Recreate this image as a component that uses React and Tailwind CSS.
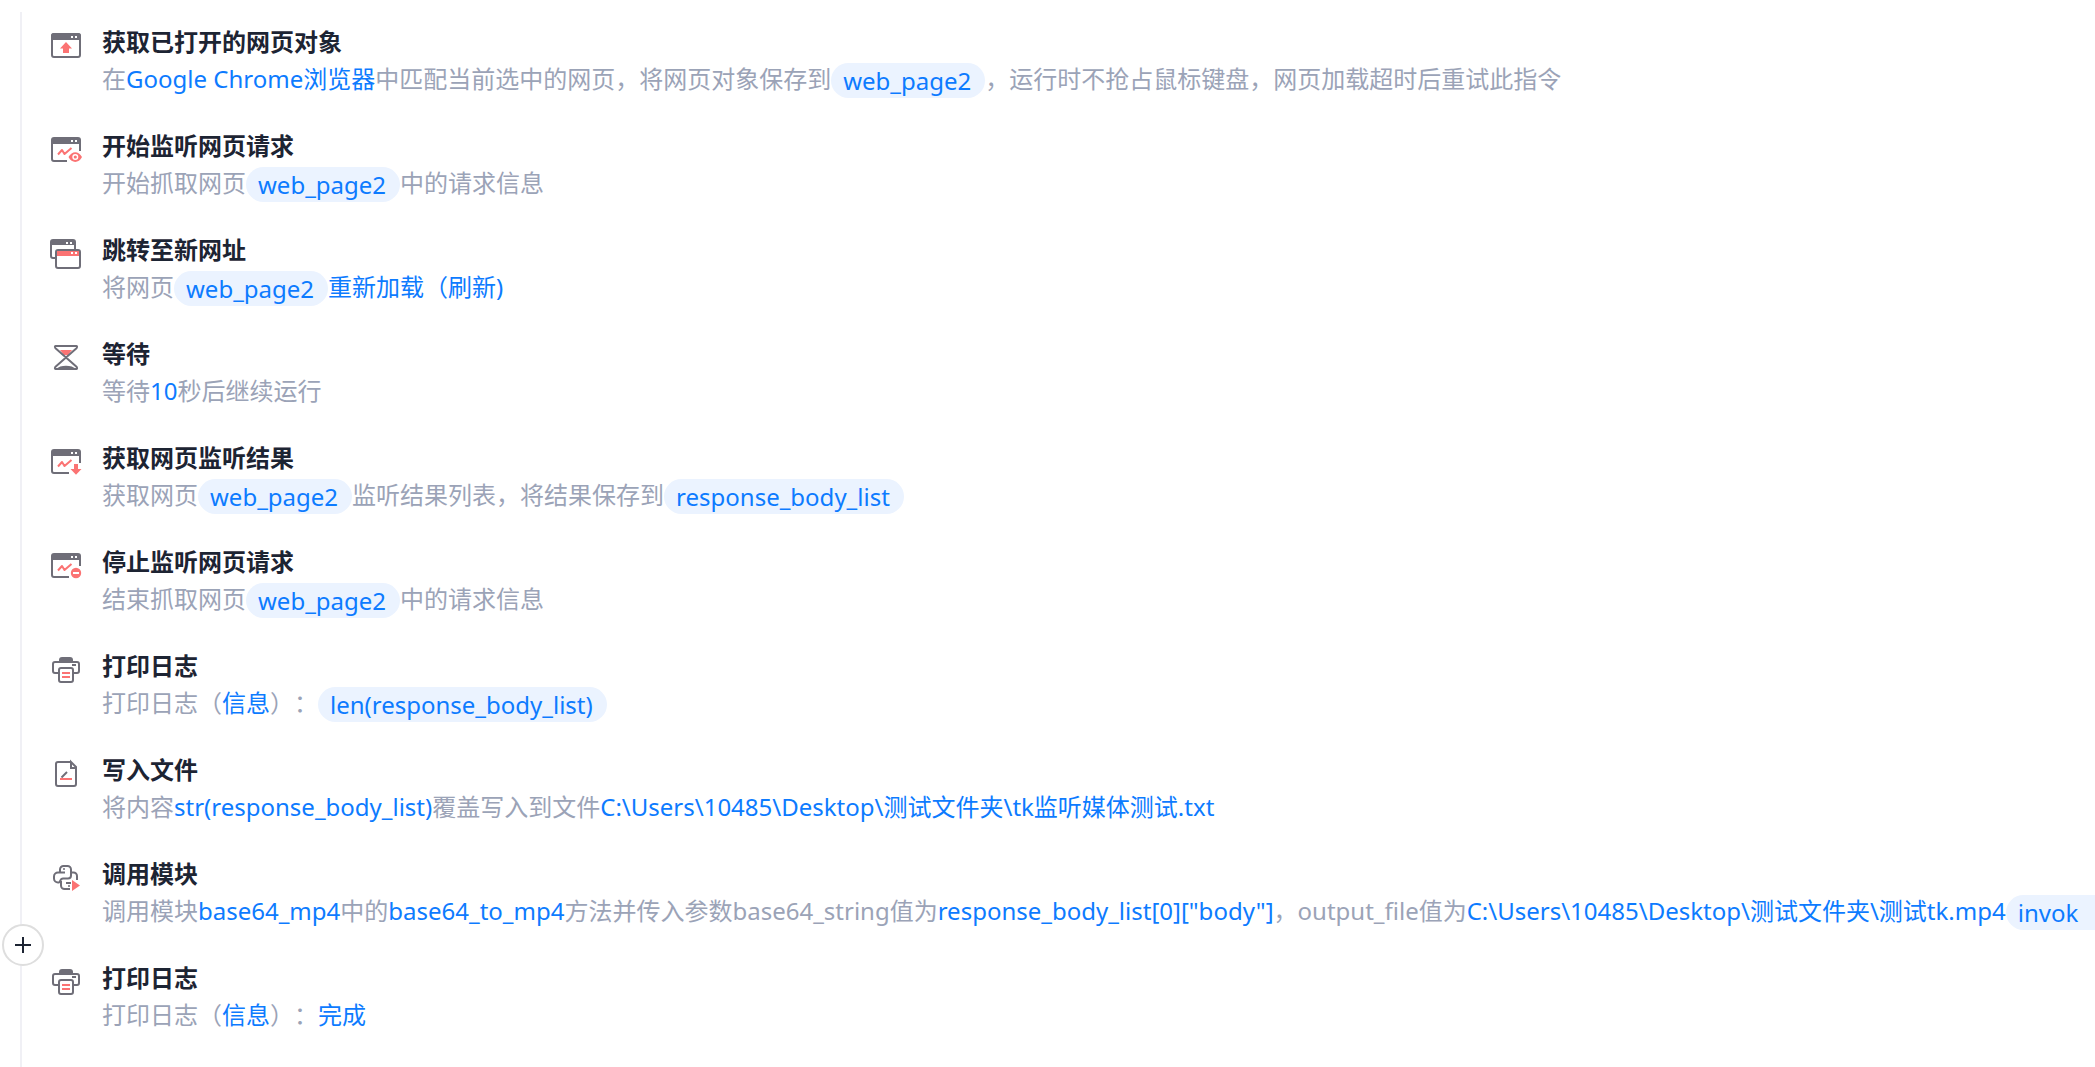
const DARK = "#6f6e78";
const RED = "#fb7373";

function WindowFrame({ cut }) {
  return (
    <>
      {cut ? (
        <path d={cut} fill="none" stroke={DARK} strokeWidth="2" />
      ) : (
        <rect x="2" y="5" width="28" height="23" rx="2" fill="none" stroke={DARK} strokeWidth="2" />
      )}
      <path d="M1 11V7a3 3 0 0 1 3-3h24a3 3 0 0 1 3 3v4z" fill={DARK} />
      <path d="M21 7h2v2h-2zM25 7h2v2h-2z" fill="#fff" />
    </>
  );
}

function Svg({ children }) {
  return (
    <svg viewBox="0 0 32 32" className="size-8 shrink-0" aria-hidden="true">
      {children}
    </svg>
  );
}

function Zigzag() {
  return (
    <path d="M8 21.500L12 17l2.500 4L21.500 15" fill="none" stroke={RED} strokeWidth="2" strokeLinejoin="round" />
  );
}

const icons = {
  page: (
    <Svg>
      <WindowFrame />
      <path d="M16 13l6 6.500h-3V24h-6v-4.500h-3z" fill={RED} />
    </Svg>
  ),
  watch: (
    <Svg>
      <WindowFrame cut="M30 8v10M17 28H4a2 2 0 0 1-2-2V8" />
      <Zigzag />
      <path d="M18.500 24c3.500-6.500 10-6.500 13.500 0c-3.500 6.500-10 6.500-13.500 0z" fill={RED} />
      <circle cx="25.300" cy="24" r="2.300" fill={RED} stroke="#fff" strokeWidth="1.400" />
    </Svg>
  ),
  jump: (
    <Svg>
      <rect x="1" y="3" width="24" height="18" rx="2" fill="#fff" stroke={DARK} strokeWidth="2" />
      <path d="M1 4h24v4H1z" fill={DARK} />
      <path d="M16 5h2v2h-2zM20 5h2v2h-2z" fill="#fff" />
      <rect x="6" y="13" width="24" height="18" rx="2" fill="#fff" stroke={DARK} strokeWidth="2" />
      <path d="M7 14h22v5H7z" fill={RED} />
      <path d="M21 15h2v2h-2zM25 15h2v2h-2z" fill="#fff" />
    </Svg>
  ),
  wait: (
    <Svg>
      <path d="M10 9h12l-4 5h-4z" fill={RED} />
      <path
        d="M5.500 5h21c.800 0 .700 1.500 0 2.200L16 16.500L5.500 7.200C4.800 6.500 4.700 5 5.500 5zM5.500 28h21c.800 0 .700-1.500 0-2.200L16 16.500L5.500 25.800C4.800 26.500 4.700 28 5.500 28z"
        fill="none"
        stroke={DARK}
        strokeWidth="2"
        strokeLinejoin="round"
      />
      <path d="M6 28c4-4.500 16-4.500 20 0z" fill={DARK} />
    </Svg>
  ),
  result: (
    <Svg>
      <WindowFrame cut="M30 8v10M19 28H4a2 2 0 0 1-2-2V8" />
      <Zigzag />
      <path d="M24 19h4v5h3.500L26 29.800L20.500 24H24z" fill={RED} />
    </Svg>
  ),
  stop: (
    <Svg>
      <WindowFrame cut="M30 8v9M19 28H4a2 2 0 0 1-2-2V8" />
      <Zigzag />
      <circle cx="26" cy="24" r="5.200" fill={RED} />
      <path d="M23 23h6v2h-6z" fill="#fff" />
    </Svg>
  ),
  print: (
    <Svg>
      <path d="M9 9V7a3 3 0 0 1 3-3h8a3 3 0 0 1 3 3v2z" fill={DARK} />
      <path
        d="M8 20H5a2 2 0 0 1-2-2v-7a2 2 0 0 1 2-2h22a2 2 0 0 1 2 2v7a2 2 0 0 1-2 2h-3M22 12h4"
        fill="none"
        stroke={DARK}
        strokeWidth="2"
      />
      <rect x="9" y="15" width="14" height="14" rx="2" fill="#fff" stroke={DARK} strokeWidth="2" />
      <path d="M12 20h8M12 24h8" stroke={RED} strokeWidth="2" />
    </Svg>
  ),
  file: (
    <Svg>
      <path
        d="M20 5H8a2 2 0 0 0-2 2v20a2 2 0 0 0 2 2h16a2 2 0 0 0 2-2V10l-5-5v6h5"
        fill="none"
        stroke={DARK}
        strokeWidth="2"
      />
      <path d="M11.500 20.500l5.500-5.500" stroke={DARK} strokeWidth="2" />
      <path d="M10 22h12" stroke={RED} strokeWidth="2" />
    </Svg>
  ),
  python: (
    <Svg>
      <path
        d="M15 11.500H8a4 4 0 0 0-4 4v2a4 4 0 0 0 4 4h1c1 0 1-4 4-4h5c2 0 3-1.500 3-3V8.500a3.500 3.500 0 0 0-3.500-3.500h-4a3.500 3.500 0 0 0-3.500 3.500v3"
        fill="none"
        stroke={DARK}
        strokeWidth="2"
      />
      <path
        d="M21 11.500h2.500a3.500 3.500 0 0 1 3.500 3.500v4M11 20v4.500a3.500 3.500 0 0 0 3.500 3.500H20M16 22h5"
        fill="none"
        stroke={DARK}
        strokeWidth="2"
      />
      <path d="M13 8h2M18 25h2" stroke={DARK} strokeWidth="1.600" />
      <path d="M22 19l8 5.500l-8 5.500z" fill={RED} />
    </Svg>
  ),
};

const link = (text) => ({ kind: "link", text });
const chip = (text) => ({ kind: "chip", text });
const openChip = (text) => ({ kind: "openChip", text });

const steps = [
  {
    icon: "page",
    title: "获取已打开的网页对象",
    parts: [
      "在",
      link("Google Chrome浏览器"),
      "中匹配当前选中的网页，将网页对象保存到",
      chip("web_page2"),
      "，运行时不抢占鼠标键盘，网页加载超时后重试此指令",
    ],
  },
  { icon: "watch", title: "开始监听网页请求", parts: ["开始抓取网页", chip("web_page2"), "中的请求信息"] },
  { icon: "jump", title: "跳转至新网址", parts: ["将网页", chip("web_page2"), link("重新加载（刷新)")] },
  { icon: "wait", title: "等待", parts: ["等待", link("10"), "秒后继续运行"] },
  {
    icon: "result",
    title: "获取网页监听结果",
    parts: ["获取网页", chip("web_page2"), "监听结果列表，将结果保存到", chip("response_body_list")],
  },
  { icon: "stop", title: "停止监听网页请求", parts: ["结束抓取网页", chip("web_page2"), "中的请求信息"] },
  { icon: "print", title: "打印日志", parts: ["打印日志（", link("信息"), "）：", chip("len(response_body_list)")] },
  {
    icon: "file",
    title: "写入文件",
    parts: [
      "将内容",
      link("str(response_body_list)"),
      "覆盖写入到文件",
      link("C:\\Users\\10485\\Desktop\\测试文件夹\\tk监听媒体测试.txt"),
    ],
  },
  {
    icon: "python",
    title: "调用模块",
    parts: [
      "调用模块",
      link("base64_mp4"),
      "中的",
      link("base64_to_mp4"),
      "方法并传入参数base64_string值为",
      link('response_body_list[0]["body"]'),
      "，output_file值为",
      link("C:\\Users\\10485\\Desktop\\测试文件夹\\测试tk.mp4"),
      openChip("invok"),
    ],
  },
  { icon: "print", title: "打印日志", parts: ["打印日志（", link("信息"), "）：", link("完成")] },
];

function Part({ part }) {
  if (typeof part === "string") return <span>{part}</span>;
  if (part.kind === "chip") {
    return (
      <span className="mt-[3px] flex h-[35px] items-center rounded-full bg-[#ebf3ff] pr-3.5 pl-3 text-[#0d7bff]">
        {part.text}
      </span>
    );
  }
  if (part.kind === "openChip") {
    // Runs on to the edge of the canvas, so only its left end is rounded.
    return (
      <span className="mt-[3px] flex h-[35px] grow items-center rounded-l-full bg-[#ebf3ff] pl-3 text-[#0d7bff]">
        {part.text}
      </span>
    );
  }
  return (
    <a href="#" className="text-[#0d7bff]">
      {part.text}
    </a>
  );
}

function Step({ step }) {
  return (
    <li className="flex items-start gap-5">
      <div className="pt-1">{icons[step.icon]}</div>
      <div className="min-w-0 flex-1">
        <h2 className="text-2xl leading-[34px] font-bold text-[#1d2433]">{step.title}</h2>
        <p className="flex h-10 items-center text-2xl leading-10 whitespace-pre text-[#9ba3b7]">
          {step.parts.map((part, i) => (
            <Part key={i} part={part} />
          ))}
        </p>
      </div>
    </li>
  );
}

export default function App() {
  return (
    <main className="relative min-h-screen overflow-hidden bg-white pt-3 pl-5 font-['Noto_Sans','Noto_Sans_CJK_SC',sans-serif] [text-spacing-trim:space-all]">
      <ol className="flex min-h-[calc(100vh-12px)] flex-col gap-[30px] border-l-2 border-[#f0f0f5] pt-[13px] pl-7">
        {steps.map((step, i) => (
          <Step key={i} step={step} />
        ))}
      </ol>
      <button
        type="button"
        aria-label="添加指令"
        className="absolute top-[924px] left-0.5 flex size-[42px] items-center justify-center rounded-full border-2 border-[#dedede] bg-white text-[#1d2433]"
      >
        <svg viewBox="0 0 16 16" className="size-4" stroke="currentColor" strokeWidth="2" aria-hidden="true">
          <path d="M0 8h16M8 0v16" />
        </svg>
      </button>
    </main>
  );
}
